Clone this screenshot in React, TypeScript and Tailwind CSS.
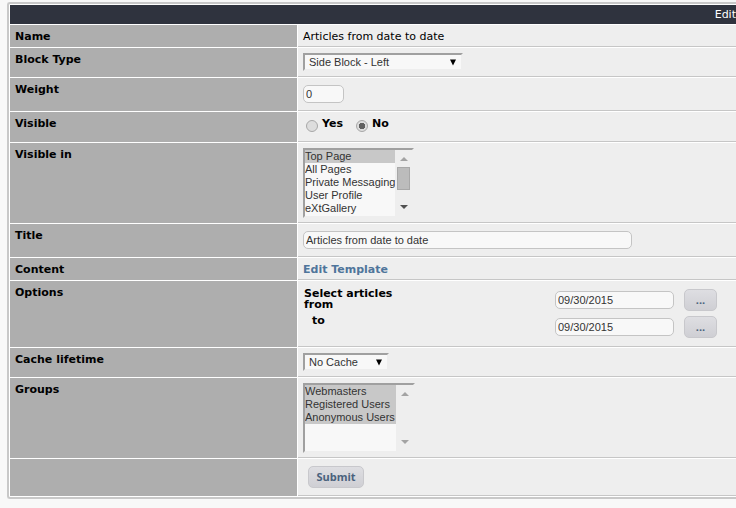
import type { ReactNode } from "react";

type RowProps = {
  label?: string;
  htmlFor?: string;
  height: string;
  children: ReactNode;
};

function Row({ label, htmlFor, height, children }: RowProps) {
  return (
    <div className={`flex gap-px ${height}`}>
      <div className="w-[287px] shrink-0 bg-[#aeaeae] px-[5px] pt-[5px] font-bold">
        {htmlFor ? <label htmlFor={htmlFor}>{label}</label> : label}
      </div>
      <div className="min-w-0 flex-1 border-b border-[#c6c6c6] bg-[#eeeeee] px-[5px]">
        {children}
      </div>
    </div>
  );
}

const control = "font-['Liberation_Sans',Arial,sans-serif] text-[11px] text-[#333333]";
const field = `${control} block h-[18px] rounded-[5px] border border-[#c4c4c4] bg-[#f8f8f8] px-0.5`;
const sunken = "border-2 border-t-[#a0a0a0] border-l-[#a0a0a0] border-r-[#eeeeee] border-b-[#eeeeee]";
const button =
  "h-[22px] rounded-[5px] border border-[#c8c8cc] bg-linear-to-b from-[#dedee2] to-[#cfcfd4] font-['Open_Sans',sans-serif] text-[11px] leading-[18px] font-bold text-[#4a627d]";

function DropDown({ id, value, width }: { id: string; value: string; width: string }) {
  return (
    <div className={`grid items-center ${width}`}>
      <select
        id={id}
        defaultValue={value}
        className={`${control} ${sunken} col-start-1 row-start-1 h-[18px] w-full appearance-none bg-[#f8f8f8] px-1`}
      >
        <option>{value}</option>
      </select>
      <svg viewBox="0 0 8 7" className="pointer-events-none col-start-1 row-start-1 mr-1.5 h-[7px] w-2 justify-self-end" aria-hidden="true">
        <path d="M1 0.5h6L4 6.5z" fill="#000" />
      </svg>
    </div>
  );
}

type ListProps = { id: string; options: string[]; selected: string[]; width: string; scrollable?: boolean };

function ListBox({ id, options, selected, width, scrollable }: ListProps) {
  return (
    <div className={`flex h-[70px] ${width} ${sunken} bg-[#eeeeee]`}>
      <select
        id={id}
        multiple
        size={5}
        defaultValue={selected}
        className={`${control} h-full min-w-0 flex-1 overflow-hidden bg-[#f8f8f8]`}
      >
        {options.map((o) => (
          <option
            key={o}
            className="h-[13px] min-h-0 p-0 leading-[13px] checked:bg-[#c8c8c8] checked:text-[#333333]"
          >
            {o}
          </option>
        ))}
      </select>
      <div className="flex w-[17px] flex-col items-center justify-between py-[7px]" aria-hidden="true">
        <svg viewBox="0 0 8 4" className="h-1 w-2">
          <path d="M0 4h8L4 0z" fill="#a3a3a3" />
        </svg>
        {scrollable && <div className="mb-2.5 h-[23px] w-[13px] border border-[#a8a8a8] bg-[#bcbcbc]" />}
        <svg viewBox="0 0 8 4" className="h-1 w-2">
          <path d="M0 0h8L4 4z" fill={scrollable ? "#505050" : "#a3a3a3"} />
        </svg>
      </div>
    </div>
  );
}

function Radio({ label, checked }: { label: string; checked?: boolean }) {
  return (
    <label className="flex items-start gap-1 font-bold">
      <input
        type="radio"
        name="visible"
        defaultChecked={checked}
        className="mt-[3px] size-3 appearance-none rounded-full border border-[#a8a8a8] bg-[#dddddd] checked:bg-[radial-gradient(circle,#606060_0_3px,#dddddd_3px)]"
      />
      {label}
    </label>
  );
}

function DateRow({ id, label, pick, labelPad }: { id: string; label: string; pick: string; labelPad: string }) {
  return (
    <div className="flex h-6">
      <label htmlFor={id} className={`w-[251px] leading-[11px] font-bold ${labelPad}`}>
        {label}
      </label>
      <div className="flex items-center gap-2.5">
        <input id={id} defaultValue="09/30/2015" className={`${field} w-[119px]`} />
        <button type="button" aria-label={pick} className={`${button} w-[33px]`}>
          ...
        </button>
      </div>
    </div>
  );
}

export default function App() {
  return (
    <div className="min-h-screen overflow-hidden bg-[#f8f8f8] pt-0.5 pl-[7px] font-['DejaVu_Sans',Verdana,sans-serif] text-[11px] leading-[14px] text-black">
      <form
        onSubmit={(e) => e.preventDefault()}
        className="flex flex-col gap-px rounded-l-[3px] border-2 border-r-0 border-[#c8c8c8] bg-white py-px pl-px"
      >
        <h1 className="h-[19px] bg-[#2f333e] text-right leading-[20px] text-white">Edit</h1>
        <Row label="Name" height="min-h-[22px]">
          <p className="pt-[5px]">Articles from date to date</p>
        </Row>
        <Row label="Block Type" htmlFor="side" height="min-h-[29px]">
          <div className="pt-[5px]">
            <DropDown id="side" value="Side Block - Left" width="w-40" />
          </div>
        </Row>
        <Row label="Weight" htmlFor="weight" height="min-h-[33px]">
          <div className="pt-[7px]">
            <input id="weight" defaultValue="0" className={`${field} w-[41px]`} />
          </div>
        </Row>
        <Row label="Visible" height="min-h-[30px]">
          <div className="flex gap-[13px] pt-[5px] pl-[3px]">
            <Radio label="Yes" />
            <Radio label="No" checked />
          </div>
        </Row>
        <Row label="Visible in" htmlFor="pages" height="min-h-[80px]">
          <div className="pt-[5px]">
            <ListBox
              id="pages"
              options={["Top Page", "All Pages", "Private Messaging", "User Profile", "eXtGallery"]}
              selected={["Top Page"]}
              width="w-[111px]"
              scrollable
            />
          </div>
        </Row>
        <Row label="Title" htmlFor="title" height="min-h-[33px]">
          <div className="pt-[7px]">
            <input id="title" defaultValue="Articles from date to date" className={`${field} w-[329px]`} />
          </div>
        </Row>
        <Row label="Content" height="min-h-[22px]">
          <a href="#template" className="block pt-[5px] font-bold text-[#4f759b]">
            Edit Template
          </a>
        </Row>
        <Row label="Options" height="min-h-[66px]">
          <div className="flex flex-col gap-[3px] pt-[7px] pl-px">
            <DateRow id="from" label="Select articles from" pick="Pick start date" labelPad="pr-[150px]" />
            <DateRow id="to" label="to" pick="Pick end date" labelPad="pl-2" />
          </div>
        </Row>
        <Row label="Cache lifetime" htmlFor="cache" height="min-h-[29px]">
          <div className="pt-[5px]">
            <DropDown id="cache" value="No Cache" width="w-[86px]" />
          </div>
        </Row>
        <Row label="Groups" htmlFor="groups" height="min-h-[80px]">
          <div className="pt-[5px]">
            <ListBox
              id="groups"
              options={["Webmasters", "Registered Users", "Anonymous Users"]}
              selected={["Webmasters", "Registered Users", "Anonymous Users"]}
              width="w-28"
            />
          </div>
        </Row>
        <Row height="min-h-[37px]">
          <div className="pt-[7px] pl-[5px]">
            <button type="submit" className={`${button} block w-14`}>
              Submit
            </button>
          </div>
        </Row>
      </form>
    </div>
  );
}
